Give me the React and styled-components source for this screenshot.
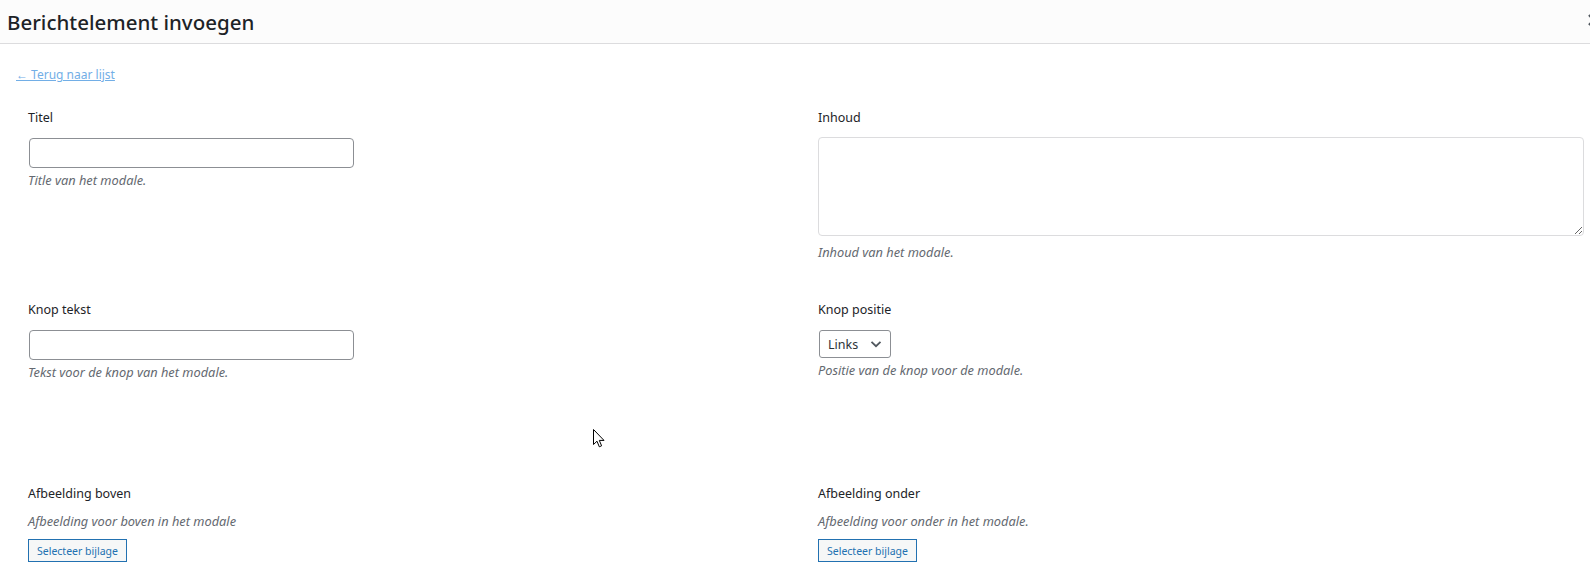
import React from 'react';
import styled, { createGlobalStyle } from 'styled-components';

const GlobalStyle = createGlobalStyle`
  html, body {
    margin: 0;
    padding: 0;
    background: #fff;
  }
  body {
    font-family: 'Noto Sans', 'Open Sans', sans-serif;
    font-size: 13px;
    color: #1d2327;
  }
`;

const Modal = styled.div`
  width: 1590px;
  height: 584px;
  position: relative;
  overflow: hidden;
  background: #fff;
`;

const Header = styled.div`
  height: 44px;
  background: #fcfcfc;
  border-bottom: 1px solid #dcdcde;
  display: flex;
  align-items: center;
  justify-content: space-between;
  padding-left: 7px;
  box-sizing: border-box;
  overflow: hidden;
`;

const Title = styled.h1`
  margin: 0;
  font-size: 20.5px;
  font-weight: 500;
  color: #1d2327;
`;

const Close = styled.button`
  border: 0;
  background: none;
  padding: 0;
  width: 20px;
  height: 20px;
  margin-right: -14px;
  margin-top: -4px;
  display: flex;
  align-items: center;
  justify-content: center;
  cursor: pointer;
`;

const Body = styled.div`
  padding: 21px 0 0 16px;
`;

const BackLink = styled.a`
  display: inline-block;
  font-size: 12px;
  color: #72aee6;
  text-decoration: underline;
  margin-bottom: 27px;
`;

const Row = styled.div`
  display: grid;
  grid-template-columns: 790px 790px;
  margin-bottom: ${p => p.$space}px;
`;

const Cell = styled.div`
  padding: 0 12px;
  display: flex;
  flex-direction: column;
  align-items: flex-start;
`;

const Label = styled.label`
  font-size: 12.5px;
  line-height: 16px;
  color: #1d2327;
  margin-bottom: ${p => p.$space ?? 12}px;
`;

const TextInput = styled.input`
  width: 325px;
  height: 30px;
  box-sizing: border-box;
  border: 1px solid #8c8f94;
  border-radius: 4px;
  margin: 0 0 0 1px;
  padding: 0 8px;
`;

const TextArea = styled.textarea`
  width: 100%;
  height: 99px;
  box-sizing: border-box;
  border: 1px solid #dcdcde;
  border-radius: 4px;
  margin: -1px 0 0;
  padding: 4px 8px;
`;

const Select = styled.div`
  width: 72px;
  height: 28px;
  box-sizing: border-box;
  margin-left: 1px;
  border: 1px solid #8c8f94;
  border-radius: 3px;
  display: flex;
  align-items: center;
  justify-content: space-between;
  padding: 0 7px 0 8px;
  font-size: 12.5px;
  color: #2c3338;
`;

const Desc = styled.p`
  margin: ${p => p.$top ?? 4}px 0 0;
  font-size: 12.8px;
  line-height: 16px;
  font-style: italic;
  color: #646970;
`;

const MediaButton = styled.button`
  margin-top: 10px;
  height: 23px;
  padding: 0 8px;
  border: 1px solid #2271b1;
  border-radius: 0;
  background: #f6f7f7;
  color: #2271b1;
  font-family: 'Noto Sans', sans-serif;
  font-size: 10.5px;
  cursor: pointer;
`;

const Pointer = styled.svg`
  position: absolute;
  left: 593px;
  top: 429px;
`;

const Chevron = () => (
  <svg width="14" height="14" viewBox="0 0 14 14">
    <path d="M2.5 4.8 L7 9.2 L11.5 4.8" fill="none" stroke="#50575e" strokeWidth="1.8" />
  </svg>
);

export default function App() {
  return (
    <Modal>
      <GlobalStyle />
      <Header>
        <Title>Berichtelement invoegen</Title>
        <Close aria-label="Sluiten">
          <svg width="14" height="14" viewBox="0 0 14 14">
            <path d="M2 2 L12 12 M12 2 L2 12" stroke="#50575e" strokeWidth="2.4" />
          </svg>
        </Close>
      </Header>
      <Body>
        <BackLink href="#">← Terug naar lijst</BackLink>
        <Row $space={42}>
          <Cell>
            <Label>Titel</Label>
            <TextInput type="text" />
            <Desc>Title van het modale.</Desc>
          </Cell>
          <Cell>
            <Label>Inhoud</Label>
            <TextArea />
            <Desc $top={8}>Inhoud van het modale.</Desc>
          </Cell>
        </Row>
        <Row $space={106}>
          <Cell>
            <Label>Knop tekst</Label>
            <TextInput type="text" />
            <Desc>Tekst voor de knop van het modale.</Desc>
          </Cell>
          <Cell>
            <Label>Knop positie</Label>
            <Select>
              <span>Links</span>
              <Chevron />
            </Select>
            <Desc>Positie van de knop voor de modale.</Desc>
          </Cell>
        </Row>
        <Row $space={0}>
          <Cell>
            <Label $space={5}>Afbeelding boven</Label>
            <Desc $top={6}>Afbeelding voor boven in het modale</Desc>
            <MediaButton>Selecteer bijlage</MediaButton>
          </Cell>
          <Cell>
            <Label $space={5}>Afbeelding onder</Label>
            <Desc $top={6}>Afbeelding voor onder in het modale.</Desc>
            <MediaButton>Selecteer bijlage</MediaButton>
          </Cell>
        </Row>
      </Body>
      <Pointer width="12" height="19" viewBox="0 0 12 19">
        <path d="M0.5 0.5 L0.5 15.5 L4 12.2 L6.3 17.8 L8.6 16.8 L6.3 11.4 L11 11.4 Z" fill="#fff" stroke="#000" strokeWidth="1" strokeLinejoin="round" />
      </Pointer>
    </Modal>
  );
}
